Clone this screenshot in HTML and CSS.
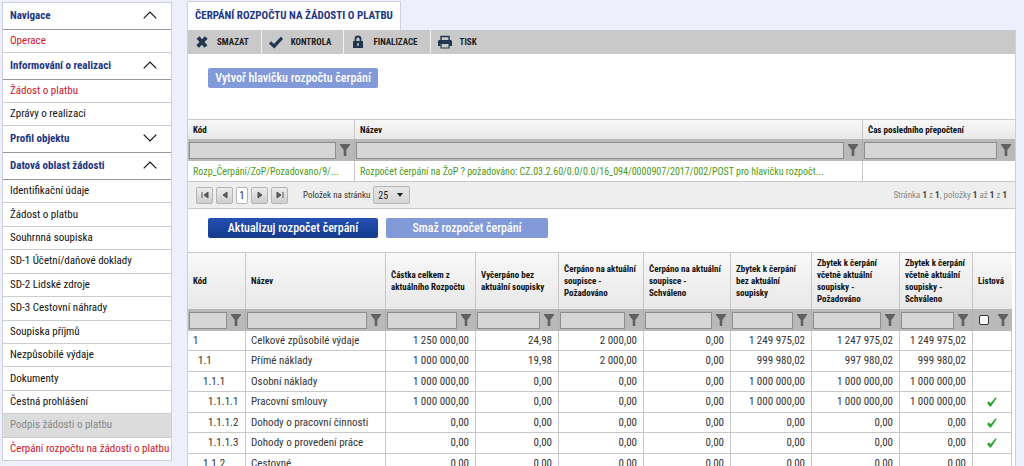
FILE: index.html
```html
<!DOCTYPE html>
<html lang="cs">
<head>
<meta charset="utf-8">
<title>Čerpání rozpočtu na žádosti o platbu</title>
<link rel="stylesheet" href="styles.css">
</head>
<body>
<svg class="sprite" aria-hidden="true">
  <symbol id="up" viewBox="0 0 14 8"><path d="M.7 7.3 7 1l6.300 6.300" fill="none" stroke="currentColor" stroke-width="1.200"/></symbol>
  <symbol id="down" viewBox="0 0 14 8"><path d="M.7.7 7 7 13.300.7" fill="none" stroke="currentColor" stroke-width="1.200"/></symbol>
  <symbol id="funnel" viewBox="0 0 10 12"><path d="M0 0h10v1L6.300 6v6H3.700V6L0 1z" fill="currentColor"/></symbol>
  <symbol id="tick" viewBox="0 0 10 10"><path d="M.1 6 2 4.300l1.600 1.900L8.400.5l1.500.3-5.900 8.600H2.700z" fill="currentColor"/></symbol>
</svg>
<div class="page">
  <nav class="sidebar">
    <button class="section" type="button">Navigace<svg><use href="#up"/></svg></button>
    <ul class="links"><li><a class="alert" href="#">Operace</a></li></ul>
    <button class="section" type="button">Informování o realizaci<svg><use href="#up"/></svg></button>
    <ul class="links">
      <li><a class="alert" href="#">Žádost o platbu</a></li>
      <li><a href="#">Zprávy o realizaci</a></li>
    </ul>
    <button class="section" type="button">Profil objektu<svg><use href="#down"/></svg></button>
    <button class="section" type="button">Datová oblast žádosti<svg><use href="#up"/></svg></button>
    <ul class="links grow">
      <li><a href="#">Identifikační údaje</a></li>
      <li><a href="#">Žádost o platbu</a></li>
      <li><a href="#">Souhrnná soupiska</a></li>
      <li><a href="#">SD-1 Účetní/daňové doklady</a></li>
      <li><a href="#">SD-2 Lidské zdroje</a></li>
      <li><a href="#">SD-3 Cestovní náhrady</a></li>
      <li><a href="#">Soupiska příjmů</a></li>
      <li><a href="#">Nezpůsobilé výdaje</a></li>
      <li><a href="#">Dokumenty</a></li>
      <li><a href="#">Čestná prohlášení</a></li>
      <li class="off"><a>Podpis žádosti o platbu</a></li>
      <li><a class="alert" href="#">Čerpání rozpočtu na žádosti o platbu</a></li>
    </ul>
  </nav>
  <main class="main">
    <h1 class="tab">ČERPÁNÍ ROZPOČTU NA ŽÁDOSTI O PLATBU</h1>
    <div class="panel">
      <div class="toolbar">
        <button class="tool" type="button"><svg viewBox="0 0 14 14"><path d="M3 2.500 11 11.500M11.300 2.500 2.700 11.500" fill="none" stroke="currentColor" stroke-width="3.800"/></svg>SMAZAT</button>
        <button class="tool" type="button"><svg viewBox="0 0 14 14"><path d="M1 7.500 5.200 11.200 13 2.800" fill="none" stroke="currentColor" stroke-width="3.200"/></svg>KONTROLA</button>
        <button class="tool" type="button"><svg viewBox="0 0 14 14"><path d="M4.500 7V4a2.500 2.500 0 0 1 5 0v3" fill="none" stroke="currentColor" stroke-width="1.800"/><path fill-rule="evenodd" d="M2 6h10v7H2zM6.300 8v3h1.400V8z" fill="currentColor"/></svg>FINALIZACE</button>
        <button class="tool" type="button"><svg viewBox="0 0 14 14"><path d="M3 5V1.500h8V5" fill="none" stroke="currentColor" stroke-width="1.400"/><path d="M1 5h12l1 1v5h-2.500V9h-9v2H0V6z" fill="currentColor"/><path d="M3 9v4h8V9" fill="none" stroke="currentColor" stroke-width="1.200"/></svg>TISK</button>
      </div>
      <div class="actions first"><button class="action muted" type="button">Vytvoř hlavičku rozpočtu čerpání</button></div>

      <table class="grid heads">
        <colgroup><col class="w-code"><col><col class="w-time"></colgroup>
        <thead>
          <tr><th>Kód</th><th>Název</th><th>Čas posledního přepočtení</th></tr>
          <tr class="filters">
            <td><div class="filter"><input type="text" aria-label="Kód"><svg><use href="#funnel"/></svg></div></td>
            <td><div class="filter"><input type="text" aria-label="Název"><svg><use href="#funnel"/></svg></div></td>
            <td><div class="filter"><input type="text" aria-label="Čas posledního přepočtení"><svg><use href="#funnel"/></svg></div></td>
          </tr>
        </thead>
        <tbody><tr><td>Rozp_Čerpání/ZoP/Pozadovano/9/...</td><td>Rozpočet čerpání na ŽoP ? požadováno: CZ.03.2.60/0.0/0.0/16_094/0000907/2017/002/POST pro hlavičku rozpočt...</td><td></td></tr></tbody>
      </table>
      <div class="pager">
        <div class="pages">
          <button type="button" aria-label="První"><svg viewBox="0 0 8 8"><path d="M1 1v6M7 1v6L3 4z"/></svg></button>
          <button type="button" aria-label="Předchozí"><svg viewBox="0 0 8 8"><path d="M6 1v6L2 4z"/></svg></button>
          <button class="current" type="button">1</button>
          <button type="button" aria-label="Další"><svg viewBox="0 0 8 8"><path d="M2 1v6l4-3z"/></svg></button>
          <button type="button" aria-label="Poslední"><svg viewBox="0 0 8 8"><path d="M7 1v6M1 1v6l4-3z"/></svg></button>
        </div>
        <label for="size">Položek na stránku</label>
        <span class="size"><select id="size"><option>25</option></select></span>
        <span class="info">Stránka <b>1</b> z <b>1</b>, položky <b>1</b> až <b>1</b> z <b>1</b></span>
      </div>
      <div class="actions second">
        <button class="action" type="button">Aktualizuj rozpočet čerpání</button>
        <button class="action muted short" type="button">Smaž rozpočet čerpání</button>
      </div>

      <div class="budget-wrap">
      <table class="grid budget">
        <colgroup><col class="b1"><col><col class="b3"><col class="b4"><col class="b5"><col class="b6"><col class="b7"><col class="b8"><col class="b9"><col class="b10"></colgroup>
        <thead>
          <tr>
            <th>Kód</th><th>Název</th><th>Částka celkem z<br>aktuálního Rozpočtu</th><th>Vyčerpáno bez<br>aktuální soupisky</th><th>Čerpáno na aktuální<br>soupisce -<br>Požadováno</th><th>Čerpáno na aktuální<br>soupisce -<br>Schváleno</th><th>Zbytek k čerpání<br>bez aktuální<br>soupisky</th><th>Zbytek k čerpání<br>včetně aktuální<br>soupisky -<br>Požadováno</th><th>Zbytek k čerpání<br>včetně aktuální<br>soupisky -<br>Schváleno</th><th>Listová</th>
          </tr>
          <tr class="filters">
            <td><div class="filter"><input type="text" aria-label="Kód"><svg><use href="#funnel"/></svg></div></td>
            <td><div class="filter"><input type="text" aria-label="Název"><svg><use href="#funnel"/></svg></div></td>
            <td><div class="filter"><input type="text" aria-label="Částka celkem"><svg><use href="#funnel"/></svg></div></td>
            <td><div class="filter"><input type="text" aria-label="Vyčerpáno"><svg><use href="#funnel"/></svg></div></td>
            <td><div class="filter"><input type="text" aria-label="Čerpáno, požadováno"><svg><use href="#funnel"/></svg></div></td>
            <td><div class="filter"><input type="text" aria-label="Čerpáno, schváleno"><svg><use href="#funnel"/></svg></div></td>
            <td><div class="filter"><input type="text" aria-label="Zbytek"><svg><use href="#funnel"/></svg></div></td>
            <td><div class="filter"><input type="text" aria-label="Zbytek, požadováno"><svg><use href="#funnel"/></svg></div></td>
            <td><div class="filter"><input type="text" aria-label="Zbytek, schváleno"><svg><use href="#funnel"/></svg></div></td>
            <td><div class="filter check"><input type="checkbox" aria-label="Listová"><svg><use href="#funnel"/></svg></div></td>
          </tr>
        </thead>
        <tbody>
          <tr><td>1</td><td>Celkové způsobilé výdaje</td><td>1 250 000,00</td><td>24,98</td><td>2 000,00</td><td>0,00</td><td>1 249 975,02</td><td>1 247 975,02</td><td>1 249 975,02</td><td></td></tr>
          <tr><td class="l2">1.1</td><td>Přímé náklady</td><td>1 000 000,00</td><td>19,98</td><td>2 000,00</td><td>0,00</td><td>999 980,02</td><td>997 980,02</td><td>999 980,02</td><td></td></tr>
          <tr><td class="l3">1.1.1</td><td>Osobní náklady</td><td>1 000 000,00</td><td>0,00</td><td>0,00</td><td>0,00</td><td>1 000 000,00</td><td>1 000 000,00</td><td>1 000 000,00</td><td></td></tr>
          <tr><td class="l4">1.1.1.1</td><td>Pracovní smlouvy</td><td>1 000 000,00</td><td>0,00</td><td>0,00</td><td>0,00</td><td>1 000 000,00</td><td>1 000 000,00</td><td>1 000 000,00</td><td><svg><use href="#tick"/></svg></td></tr>
          <tr><td class="l4">1.1.1.2</td><td>Dohody o pracovní činnosti</td><td>0,00</td><td>0,00</td><td>0,00</td><td>0,00</td><td>0,00</td><td>0,00</td><td>0,00</td><td><svg><use href="#tick"/></svg></td></tr>
          <tr><td class="l4">1.1.1.3</td><td>Dohody o provedení práce</td><td>0,00</td><td>0,00</td><td>0,00</td><td>0,00</td><td>0,00</td><td>0,00</td><td>0,00</td><td><svg><use href="#tick"/></svg></td></tr>
          <tr><td class="l3">1.1.2</td><td>Cestovné</td><td>0,00</td><td>0,00</td><td>0,00</td><td>0,00</td><td>0,00</td><td>0,00</td><td>0,00</td><td></td></tr>
        </tbody>
      </table>
      </div>
    </div>
  </main>
</div>
</body>
</html>
```
FILE: styles.css
```css
* { box-sizing: border-box; }
body, button, input, select {
  font-family: "Roboto Condensed", "Liberation Sans Narrow", Roboto, sans-serif;
}
body {
  margin: 0;
  height: 100vh;
  overflow: hidden;
  background: #edeffc;
  color: #222;
  font-size: 11px;
}
button { margin: 0; padding: 0; border: 0; background: none; color: inherit; }
.sprite { display: none; }
.page { display: flex; gap: 15px; height: 100vh; padding-left: 2px; padding-right: 8px; }

.sidebar {
  display: flex;
  flex-direction: column;
  flex: 0 0 170px;
  min-width: 0;
  margin: 2px 0 5px;
  border: 1px solid #cdd0da;
  border-bottom: 0;
  background: #fff;
}
.section {
  display: flex;
  flex: 0 0 27px;
  align-items: center;
  justify-content: space-between;
  padding: 0 14px 2px 7px;
  border-bottom: 1px solid #999;
  color: #1c3585;
  font-size: 11px;
  font-weight: 700;
}
.section svg { width: 14px; height: 8px; color: #111; }
.links { display: flex; flex-direction: column; margin: 0; padding: 0; list-style: none; }
.links li {
  display: flex;
  align-items: center;
  flex: 1 0 23px;
  padding-left: 7px;
  border-bottom: 1px solid #ccc;
  white-space: nowrap;
}
.links.grow { flex: 1; }
.links a { color: #111; font-size: 11px; line-height: 20px; text-decoration: none; }
.links .alert { color: #cf1228; }
.links .off { background: #dcdcdc; }
.links .off a { color: #888; }

.main { flex: 1; min-width: 0; display: flex; flex-direction: column; }
.tab {
  align-self: flex-start;
  height: 29px;
  margin: 1px 0 0;
  padding: 0 7px;
  border: 1px solid #cfd1dc;
  border-bottom: 0;
  background: #fff;
  color: #1c3585;
  font-size: 11px;
  font-weight: 700;
  line-height: 28px;
  white-space: nowrap;
}
.panel { flex: 1; border: 1px solid #cdcfd8; border-top: 0; background: #fff; }
.toolbar { display: flex; height: 24px; background: #c9c9c9; }
.tool {
  display: flex;
  align-items: center;
  gap: 8px;
  padding: 0 12px 0 7px;
  border-right: 1px solid #f3f3f3;
  color: #222;
  font-size: 9px;
  font-weight: 700;
}
.tool:last-child { border-right: 0; }
.tool svg { width: 14px; height: 14px; color: #24364f; }

.actions { display: flex; gap: 8px; padding-left: 20px; }
.first { padding-top: 14px; padding-bottom: 31px; }
.second { padding-top: 9px; padding-bottom: 14px; }
.action {
  width: 170px;
  height: 20px;
  border-radius: 2px;
  background: linear-gradient(#2450b4, #163a8c);
  color: #fff;
  font-size: 12px;
  font-weight: 500;
  line-height: 20px;
  white-space: nowrap;
}
.muted { background: #829ad8; }
.short { width: 162px; }

.grid { width: 100%; table-layout: fixed; border-collapse: separate; border-spacing: 0; }
.grid th, .grid td { overflow: hidden; padding: 0 5px; border-left: 1px solid #c8c8c8; white-space: nowrap; }
.grid th:first-child, .grid td:first-child { border-left: 0; }
.grid th {
  border-top: 1px solid #c8c8c8;
  background: linear-gradient(#f8f8f8, #e8e8e8);
  color: #111;
  font-size: 9px;
  font-weight: 700;
  line-height: 12px;
  text-align: left;
}
.grid .filters td { height: 22px; padding: 0 4px 0 1px; background: #b9b9b9; border-color: #b0b0b0; }
.filter { display: flex; align-items: center; gap: 4px; }
.filter input[type="text"] {
  flex: 1;
  min-width: 0;
  height: 17px;
  padding: 0;
  border: 1px solid #8e8e8e;
  background: #d6d6d6;
}
.filter svg { flex: none; width: 10px; height: 12px; color: #606060; }
.filter input[type="checkbox"] {
  appearance: none;
  width: 10px;
  height: 10px;
  margin: 0;
  border: 1px solid #333;
  border-radius: 2px;
  background: #fff;
}
.check { justify-content: space-between; padding-left: 5px; }

.heads .w-code { width: 166px; }
.heads .w-time { width: 153px; }
.heads th { height: 20px; }
.heads tbody td { height: 21px; padding-right: 0; color: #4b9a1a; font-size: 10px; border-bottom: 1px solid #c8c8c8; }

.pager {
  display: flex;
  align-items: center;
  height: 27px;
  padding: 0 8px;
  border-bottom: 1px solid #c8c8c8;
  background: #eee;
  color: #333;
  font-size: 9px;
}
.pages { display: flex; gap: 3px; margin-right: 15px; }
.pages button {
  display: grid;
  place-items: center;
  width: 17px;
  height: 17px;
  border: 1px solid #b5b5b5;
  border-radius: 2px;
  background: linear-gradient(#ececec, #cdcdcd);
}
.pages .current { width: 12px; background: #fff; font-size: 11px; }
.pages svg { width: 8px; height: 8px; fill: #555; stroke: #555; stroke-width: 1; }
.pages svg path { stroke-linejoin: round; }
.size { position: relative; margin-left: 3px; }
.size select {
  appearance: none;
  display: block;
  width: 37px;
  height: 18px;
  padding: 0 4px;
  border: 1px solid #b5b5b5;
  border-radius: 2px;
  background: linear-gradient(#e6e6e6, #d6d6d6);
  color: #222;
  font-size: 10px;
}
.size::after {
  content: "";
  position: absolute;
  top: 7px;
  right: 7px;
  border: 3px solid transparent;
  border-top: 4px solid #222;
  border-bottom: 0;
}
.info { margin-left: auto; color: #888; }
.info b { color: #444; }

.budget-wrap { padding-right: 3px; border-top: 1px solid #c8c8c8; }
.budget th { height: 56px; border-top: 0; }
.budget .filters td { height: 22px; }
.budget tbody td { height: 20px; border-bottom: 1px solid #c8c8c8; color: #333; text-align: right; line-height: 18px; padding-right: 6px; }
.budget tbody tr:nth-child(even) td { height: 21px; }
.budget tbody td:nth-child(-n+2) { text-align: left; padding-right: 0; }
.budget tbody td:last-child { text-align: center; padding: 0; border-right: 1px solid #c8c8c8; }
.budget tbody td svg { display: block; width: 10px; height: 10px; margin: 0 auto; color: #2ba62b; }
.budget tbody .l2 { padding-left: 10px; }
.budget tbody .l3 { padding-left: 15px; }
.budget tbody .l4 { padding-left: 20px; }
.b1 { width: 57px; }
.b3 { width: 90px; }
.b4 { width: 83px; }
.b5 { width: 85px; }
.b6 { width: 87px; }
.b7 { width: 81px; }
.b8 { width: 88px; }
.b9 { width: 73px; }
.b10 { width: 40px; }
```
